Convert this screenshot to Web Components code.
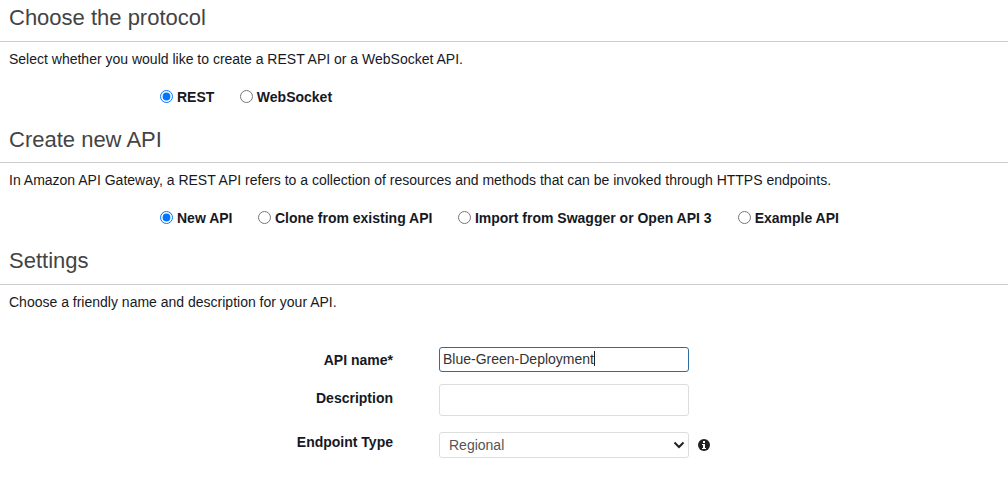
<!DOCTYPE html>
<html>
<head>
<meta charset="utf-8">
<title>Create API</title>
<style>
  html, body { margin: 0; background: #fff; overflow: hidden; }
  body { font-family: "Liberation Sans", Arial, sans-serif; color: #16191f; }
</style>
</head>
<body>
<api-page>
  <form-section heading="Choose the protocol" text="Select whether you would like to create a REST API or a WebSocket API." style="--after: 16px">
    <radio-row>
      <radio-option checked gap="25.5">REST</radio-option>
      <radio-option>WebSocket</radio-option>
    </radio-row>
  </form-section>
  <form-section heading="Create new API" text="In Amazon API Gateway, a REST API refers to a collection of resources and methods that can be invoked through HTTPS endpoints." style="--after: 17px; --head-top: 6px; --head-h: 35px">
    <radio-row>
      <radio-option checked gap="25.5">New API</radio-option>
      <radio-option gap="25.5">Clone from existing API</radio-option>
      <radio-option gap="26">Import from Swagger or Open API 3</radio-option>
      <radio-option>Example API</radio-option>
    </radio-row>
  </form-section>
  <form-section heading="Settings" text="Choose a friendly name and description for your API.">
    <settings-form></settings-form>
  </form-section>
</api-page>

<script>
class ApiPage extends HTMLElement {
  constructor() {
    super();
    const shadow = this.attachShadow({ mode: 'open' });
    shadow.innerHTML = `
      <style>
        :host { display: block; width: 1008px; height: 479px; overflow: hidden; }
      </style>
      <slot></slot>
    `;
  }
}

class FormSection extends HTMLElement {
  constructor() {
    super();
    const shadow = this.attachShadow({ mode: 'open' });
    shadow.innerHTML = `
      <style>
        :host { display: block; }
        h2 {
          margin: 0;
          padding: var(--head-top, 5px) 0 0 9px;
          height: var(--head-h, 36px);
          font-size: 22px;
          line-height: 26px;
          font-weight: 400;
          color: #444;
          border-bottom: 1px solid #ccc;
        }
        p {
          margin: 0;
          padding: 9px 0 1px 9px;
          font-size: 14px;
          line-height: 16px;
          color: #16191f;
        }
        .body { padding-bottom: var(--after, 0px); }
      </style>
      <h2></h2>
      <p></p>
      <div class="body"><slot></slot></div>
    `;
    shadow.querySelector('h2').textContent = this.getAttribute('heading');
    shadow.querySelector('p').textContent = this.getAttribute('text');
  }
}

class RadioRow extends HTMLElement {
  constructor() {
    super();
    const shadow = this.attachShadow({ mode: 'open' });
    shadow.innerHTML = `
      <style>
        :host { display: flex; align-items: center; padding: 21px 0 0 160px; height: 16px; }
      </style>
      <slot></slot>
    `;
  }
}

class RadioOption extends HTMLElement {
  constructor() {
    super();
    const shadow = this.attachShadow({ mode: 'open' });
    shadow.innerHTML = `
      <style>
        :host { display: block; }
        label {
          display: flex;
          align-items: center;
          font-size: 14px;
          font-weight: 700;
          line-height: 16px;
          color: #16191f;
        }
        input { margin: 0 4px 2px 0; width: 13px; height: 13px; }
      </style>
      <label><input type="radio"><span><slot></slot></span></label>
    `;
    shadow.querySelector('input').checked = this.hasAttribute('checked');
    this.style.marginRight = (this.getAttribute('gap') || 0) + 'px';
  }
}

class SettingsForm extends HTMLElement {
  constructor() {
    super();
    const shadow = this.attachShadow({ mode: 'open' });
    shadow.innerHTML = `
      <style>
        :host { display: block; padding-top: 36px; }
        .row {
          display: flex;
          align-items: flex-start;
          gap: 46px;
          margin-bottom: 12px;
        }
        .row.wide { margin-bottom: 16px; }
        .lab {
          width: 393px;
          font-size: 14px;
          font-weight: 700;
          line-height: 16px;
          text-align: right;
          color: #16191f;
        }
        .ctl {
          box-sizing: border-box;
          width: 250px;
          border: 1px solid #ddd;
          border-radius: 3px;
          background: #fff;
          color: #333;
        }
        .name {
          height: 25px;
          padding: 0 0 2px 3px;
          font-size: 14px;
          border-color: #2e6da4;
          display: flex;
          align-items: center;
        }
        .caret { width: 1px; height: 15px; background: #222; }
        .desc { height: 32px; }
        .sel {
          height: 26px;
          display: flex;
          align-items: center;
          justify-content: space-between;
          padding: 0 3px 0 9px;
          font-size: 14px;
          color: #555;
        }
        .info { margin: 7px 0 0 -37px; }
      </style>
      <div class="row">
        <div class="lab" style="margin-top:5px">API name*</div>
        <div class="ctl name"><span>Blue-Green-Deployment</span><span class="caret"></span></div>
      </div>
      <div class="row wide">
        <div class="lab" style="margin-top:6px">Description</div>
        <div class="ctl desc"></div>
      </div>
      <div class="row">
        <div class="lab" style="margin-top:2px">Endpoint Type</div>
        <div class="ctl sel">
          <span>Regional</span>
          <svg width="12" height="12" viewBox="0 0 12 12" fill="none" stroke="#222" stroke-width="2"><path d="M1.5 3.5l4.5 4.5 4.5-4.5"/></svg>
        </div>
        <svg class="info" width="12" height="12" viewBox="0 0 12 12">
          <circle cx="6" cy="6" r="6" fill="#222"/>
          <rect x="5" y="2" width="2" height="2" fill="#fff"/>
          <path d="M4 5h3v4h1v1H4V9h1V6H4z" fill="#fff"/>
        </svg>
      </div>
    `;
  }
}

customElements.define('api-page', ApiPage);
customElements.define('form-section', FormSection);
customElements.define('radio-row', RadioRow);
customElements.define('radio-option', RadioOption);
customElements.define('settings-form', SettingsForm);
</script>
</body>
</html>
